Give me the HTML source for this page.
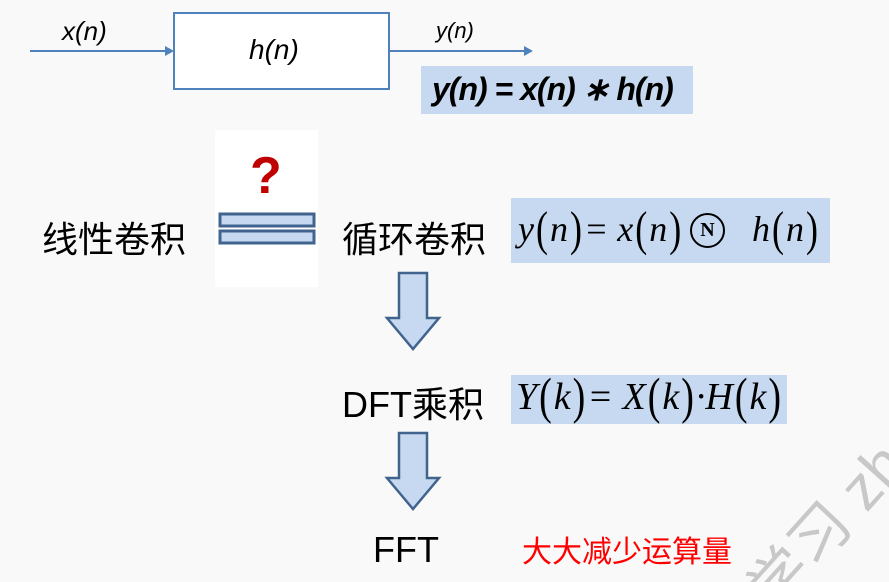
<!DOCTYPE html>
<html><head><meta charset="utf-8"><style>
html,body{margin:0;padding:0;width:889px;height:582px;overflow:hidden}
body{position:relative;background:#f9f9f9;font-family:"Liberation Sans","Noto Sans CJK SC",sans-serif}
.a{position:absolute;white-space:nowrap}
.hl{position:absolute;background:#c6d9f0}
.m{font-family:"Liberation Serif",serif;font-style:italic}
.p{display:inline-block;font-style:normal;transform:scaleY(1.35);font-weight:300;margin:0 2px}
</style></head><body>
<div class="a" style="left:215px;top:130px;width:103px;height:157px;background:#fff"></div>
<svg class="a" style="left:0;top:0" width="889" height="582">
<line x1="30" y1="51" x2="168" y2="51" stroke="#4f81bd" stroke-width="2"/>
<polygon points="174,51 165,46 165,56" fill="#4f81bd"/>
<rect x="174" y="13" width="215" height="76" fill="#fff" stroke="#4f81bd" stroke-width="2"/>
<line x1="389" y1="51" x2="526" y2="51" stroke="#4f81bd" stroke-width="2"/>
<polygon points="533,51 524,46 524,56" fill="#4f81bd"/>
<rect x="220" y="214" width="94" height="12" fill="#c6d9f0" stroke="#41648f" stroke-width="3"/>
<rect x="220" y="231" width="94" height="12" fill="#c6d9f0" stroke="#41648f" stroke-width="3"/>
<polygon points="399,273 427,273 427,318 439,318 413,349 387,318 399,318" fill="#c6d9f0" stroke="#41648f" stroke-width="2.5"/>
<polygon points="399,433 427,433 427,478 439,478 413,509 387,478 399,478" fill="#c6d9f0" stroke="#41648f" stroke-width="2.5"/>
<text x="0" y="0" transform="translate(775,615) rotate(-48)" font-size="60" fill="#c8c8c8" font-family="Liberation Sans, Noto Sans CJK SC, sans-serif">学习 zh</text>
</svg>
<div class="a" style="left:62px;top:16px;font-size:26px;font-style:italic">x(n)</div>
<div class="a" style="left:249px;top:34px;font-size:28px;font-style:italic">h(n)</div>
<div class="a" style="left:436px;top:18px;font-size:22px;font-style:italic">y(n)</div>
<div class="hl" style="left:421px;top:66px;width:272px;height:48px"></div>
<div class="a" style="left:432px;top:70px;font-size:32px;font-style:italic;font-weight:bold;letter-spacing:-1px">y(n) = x(n) ∗ h(n)</div>
<div class="a" style="left:42px;top:211px;font-size:36px">线性卷积</div>
<div class="a" style="left:250px;top:146px;font-size:52px;font-weight:bold;color:#c00000">?</div>
<div class="a" style="left:342px;top:211px;font-size:36px">循环卷积</div>
<div class="hl" style="left:511px;top:198px;width:319px;height:65px"></div>
<div class="a m" style="left:518px;top:208px;font-size:36px">y<span class="p">(</span>n<span class="p">)</span>= x<span class="p">(</span>n<span class="p">)</span></div>
<div class="a" style="left:690px;top:213px;width:35px;height:35px;border:2.5px solid #000;border-radius:50%;box-sizing:border-box;text-align:center;line-height:31px;font-family:'Liberation Serif',serif;font-weight:bold;font-size:20px">N</div>
<div class="a m" style="left:752px;top:208px;font-size:36px">h<span class="p">(</span>n<span class="p">)</span></div>
<div class="a" style="left:342px;top:376px;font-size:36px">DFT乘积</div>
<div class="hl" style="left:511px;top:375px;width:276px;height:49px"></div>
<div class="a m" style="left:516px;top:375px;font-size:38px">Y<span class="p">(</span>k<span class="p">)</span>= X<span class="p">(</span>k<span class="p">)</span>·H<span class="p">(</span>k<span class="p">)</span></div>
<div class="a" style="left:373px;top:529px;font-size:36px">FFT</div>
<div class="a" style="left:522px;top:527px;font-size:30px;color:#f00">大大减少运算量</div>
</body></html>
